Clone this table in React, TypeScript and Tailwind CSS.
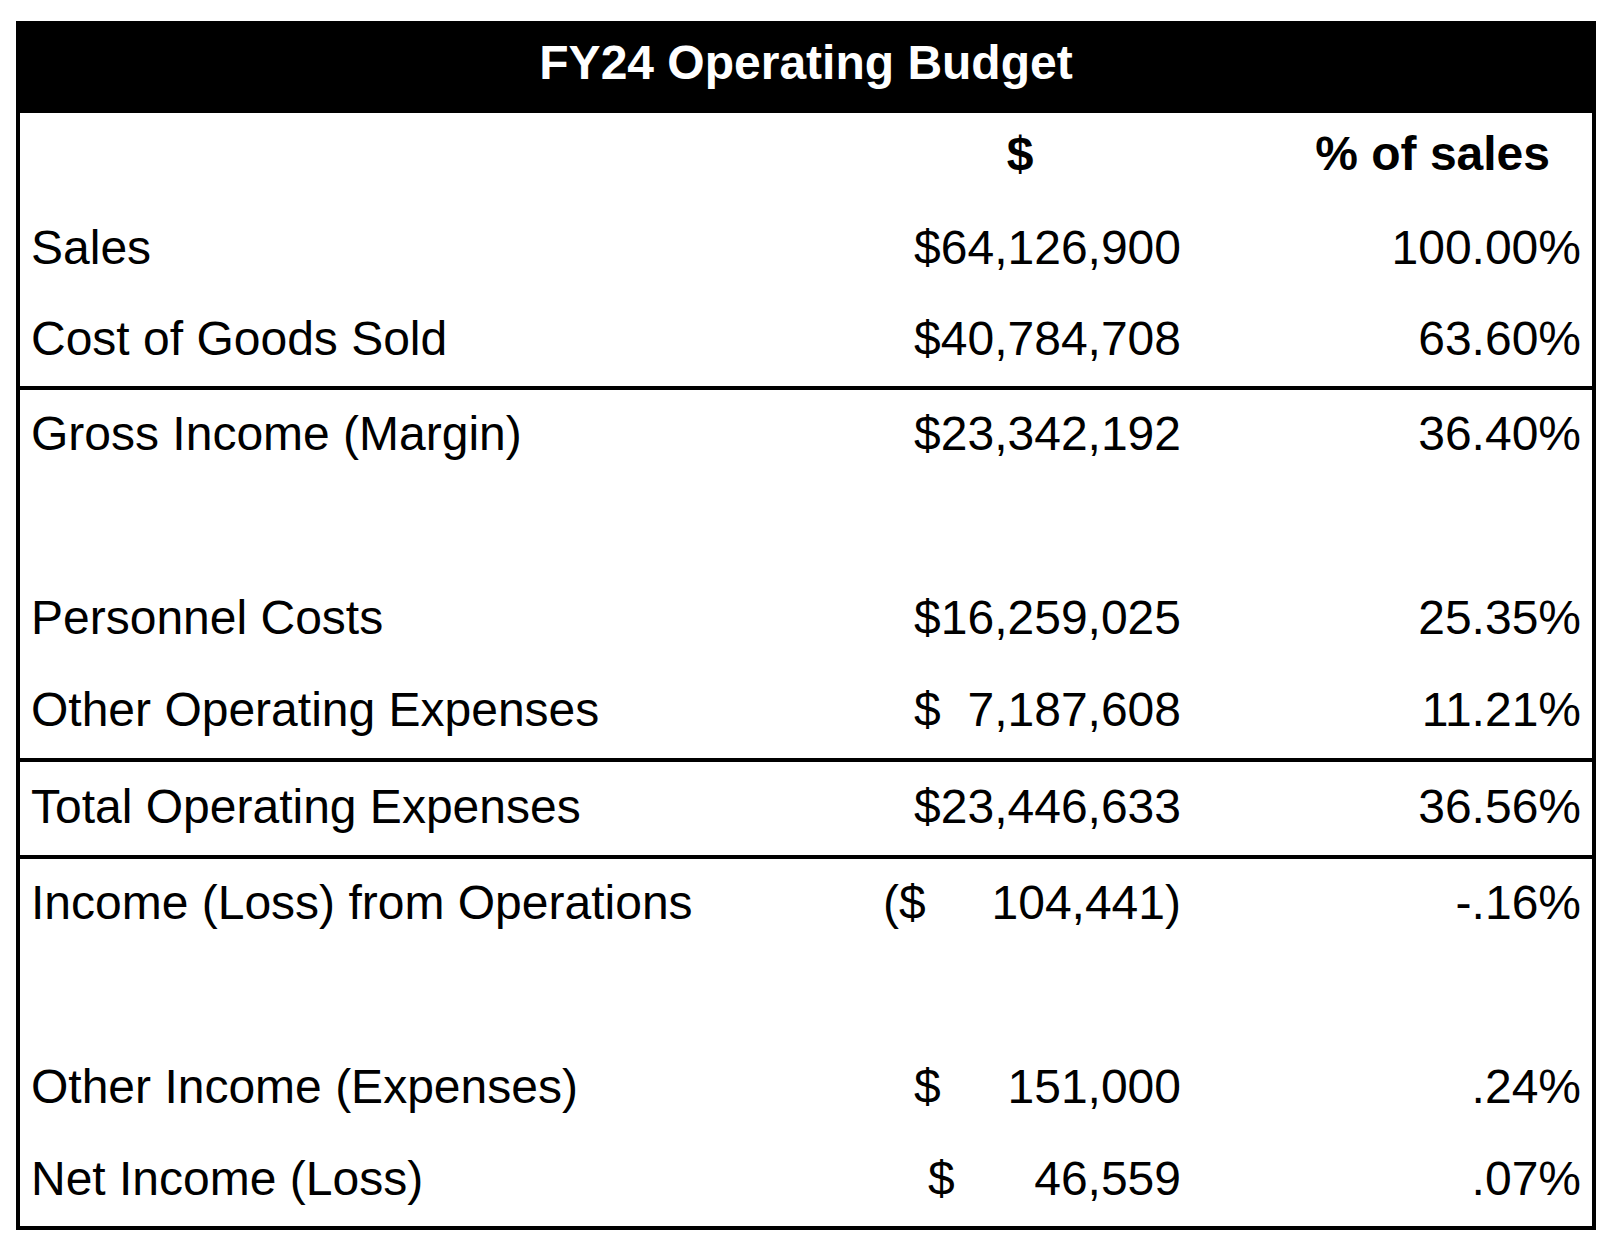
type Row = {
  label?: string;
  prefix?: string;
  prefixPad?: string;
  amount?: string;
  pct?: string;
  h: string;
  rule?: boolean;
};

const rows: Row[] = [
  { label: 'Sales', amount: '$64,126,900', pct: '100.00%', h: 'h-[91px]' },
  { label: 'Cost of Goods Sold', amount: '$40,784,708', pct: '63.60%', h: 'h-[91px]' },
  { label: 'Gross Income (Margin)', amount: '$23,342,192', pct: '36.40%', h: 'h-[96px]', rule: true },
  { h: 'h-[92px]' },
  { label: 'Personnel Costs', amount: '$16,259,025', pct: '25.35%', h: 'h-[92px]' },
  { label: 'Other Operating Expenses', prefix: '$', prefixPad: 'pl-[64px]', amount: '7,187,608', pct: '11.21%', h: 'h-[92px]' },
  { label: 'Total Operating Expenses', amount: '$23,446,633', pct: '36.56%', h: 'h-[97px]', rule: true },
  { label: 'Income (Loss) from Operations', prefix: '($', prefixPad: 'pl-[33px]', amount: '104,441)', pct: '-.16%', h: 'h-[96px]', rule: true },
  { h: 'h-[92px]' },
  { label: 'Other Income (Expenses)', prefix: '$', prefixPad: 'pl-[64px]', amount: '151,000', pct: '.24%', h: 'h-[92px]' },
  { label: 'Net Income (Loss)', prefix: '$', prefixPad: 'pl-[78px]', amount: '46,559', pct: '.07%', h: 'h-[91px]' },
];

function BudgetRow({ row }: { row: Row }) {
  return (
    <div className={`grid grid-cols-[830px_340px_1fr] items-center pb-[4px] ${row.h} ${row.rule ? 'border-t-4 border-black' : ''}`}>
      <div className="pl-[11px]">{row.label}</div>
      <div className="flex items-center justify-end pr-[9px]">
        {row.prefix ? <span className={`mr-auto ${row.prefixPad}`}>{row.prefix}</span> : null}
        <span>{row.amount}</span>
      </div>
      <div className="pr-[11px] text-right">{row.pct}</div>
    </div>
  );
}

export default function App() {
  return (
    <div className="min-h-screen bg-white pl-[16px] pt-[21px] font-['Liberation_Sans',Arial,sans-serif] text-[48px] leading-none text-black">
      <div className="w-[1580px]">
        <div className="flex h-[92px] items-center justify-center bg-black pb-[8px] font-bold text-white">
          FY24 Operating Budget
        </div>
        <div className="border-x-4 border-b-4 border-black">
          <div className="grid h-[91px] grid-cols-[830px_340px_1fr] items-center pb-[10px] font-bold">
            <div />
            <div className="text-center">$</div>
            <div className="pr-[42px] text-right">% of sales</div>
          </div>
          {rows.map((row, i) => (
            <BudgetRow key={i} row={row} />
          ))}
        </div>
      </div>
    </div>
  );
}
